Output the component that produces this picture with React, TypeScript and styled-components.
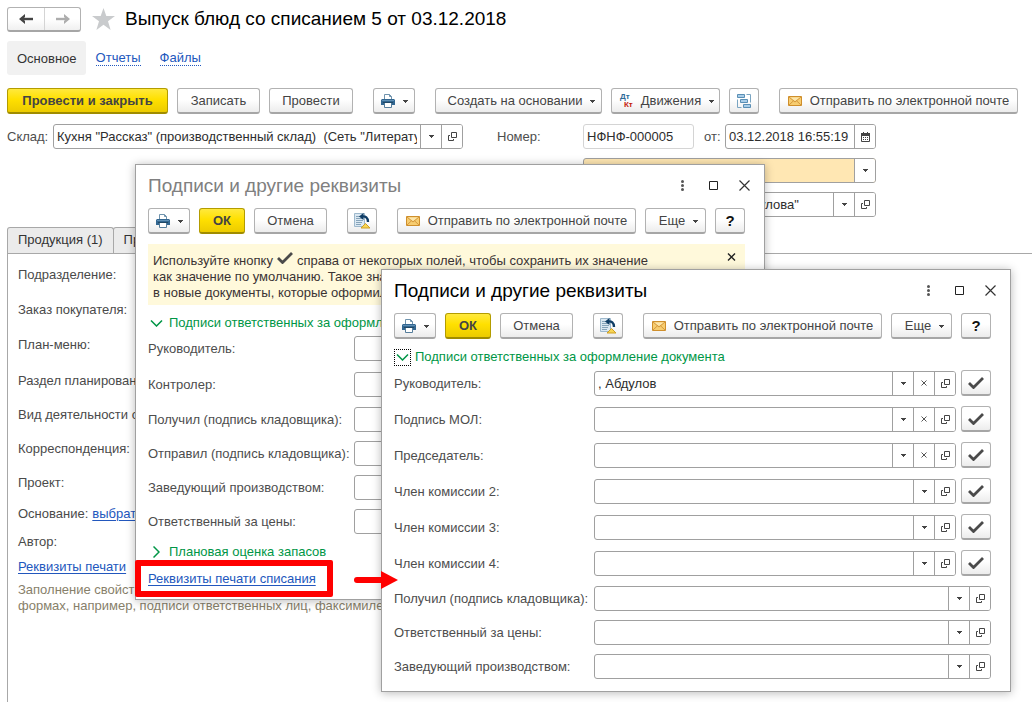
import React, { useId } from "react";
import styled, { createGlobalStyle, css } from "styled-components";

const GlobalStyle = createGlobalStyle`
  *, *::before, *::after { box-sizing: border-box; }
  body {
    margin: 0;
    background: #fff;
    color: #4a4a4a;
    font: 13px/16px "Liberation Sans", Arial, sans-serif;
  }
  button, input { font: inherit; color: inherit; margin: 0; }
  svg { display: block; flex: none; }
`;

/* ---------- page frame ---------- */

const Page = styled.div`
  position: relative;
  display: flex;
  flex-direction: column;
  min-height: 100vh;
  overflow: hidden;
  padding: 6px 0 0 7px;
`;

const Header = styled.header`
  display: flex;
  align-items: center;
  height: 26px;
`;

const History = styled.div`
  display: flex;
  margin-right: 11px;
  border: 1px solid #b2b2b2;
  border-bottom: 2px solid #a6a6a6;
  border-radius: 3px;
  background: linear-gradient(#fff 50%, #f0f0f0);
`;

const HistoryButton = styled.button`
  display: grid;
  place-items: center;
  width: 36px;
  height: 22px;
  padding: 0;
  border: 0;
  background: none;

  & + & { border-left: 1px solid #d4d4d4; }
`;

const StarButton = styled.button`
  padding: 0;
  border: 0;
  background: none;
`;

const PageTitle = styled.h1`
  margin: 0 0 0 10px;
  font-size: 19px;
  line-height: 24px;
  font-weight: 400;
  color: #000;
  white-space: nowrap;
`;

const Sections = styled.nav`
  display: flex;
  align-items: center;
  gap: 19px;
  margin-top: 9px;
`;

const CurrentSection = styled.span`
  margin-right: -9px;
  padding: 10px 9px 8px 10px;
  border-radius: 3px;
  background: #f1f1f1;
  color: #333;
`;

const SectionLink = styled.a`
  padding-top: 1px;
  border-bottom: 1px dotted #2257bd;
  color: #2257bd;
  line-height: 14px;
  text-decoration: none;
`;

/* ---------- buttons ---------- */

const Toolbar = styled.div`
  display: flex;
  gap: 9px;
`;

const MainToolbar = styled(Toolbar)`
  margin-top: 13px;
`;

const Button = styled.button<{ $w: number; $primary?: boolean; $apart?: boolean; $menu?: boolean }>`
  display: flex;
  align-items: center;
  justify-content: center;
  gap: 8px;
  flex: none;
  width: ${(p) => p.$w}px;
  height: 26px;
  margin-left: ${(p) => (p.$apart ? 11 : 0)}px;
  padding: 1px 0 0 ${(p) => (p.$menu ? 6 : 0)}px;
  border: 1px solid #b2b2b2;
  border-bottom: 2px solid #a6a6a6;
  border-radius: 3px;
  background: linear-gradient(#fff 45%, #ececec);
  color: #444;
  white-space: nowrap;

  ${(p) =>
    p.$primary &&
    css`
      border-color: #b39c00;
      border-bottom-color: #a08c00;
      background: linear-gradient(#ffe93d, #ffe000 45%, #eccb00);
      font-weight: 700;
    `}
`;

const HelpButton = styled(Button)`
  color: #111;
  font-size: 15px;
  font-weight: 700;
`;

const LedgerIcon = styled.span`
  display: flex;
  flex-direction: column;
  width: 16px;
  font-size: 8px;
  line-height: 8px;
  font-weight: 700;
`;

const Debit = styled.span`
  color: #2d6a98;
`;

const Credit = styled.span`
  align-self: flex-end;
  color: #c41a0e;
`;

/* ---------- fields ---------- */

const FieldFrame = styled.span<{ $muted?: boolean; $required?: boolean }>`
  display: flex;
  flex: 1;
  min-width: 0;
  height: 25px;
  overflow: hidden;
  border: 1px solid ${(p) => (p.$muted ? "#d4d4d4" : "#a0a0a0")};
  border-radius: 3px;
  background: ${(p) => (p.$required ? "#ffe7b3" : "#fff")};
`;

const FieldInput = styled.input`
  flex: 1;
  min-width: 0;
  width: 0;
  padding: 1px 3px 0;
  border: 0;
  outline: 0;
  background: none;
  color: #2d2d2d;
`;

const FieldButton = styled.button`
  display: grid;
  place-items: center;
  flex: none;
  width: 21px;
  padding: 0;
  border: 0;
  border-left: 1px solid #a0a0a0;
  background: #fff;
`;

const Label = styled.label`
  padding-top: 1px;
  color: #4d4d4d;
  white-space: nowrap;
`;

const HeadFields = styled.div`
  display: grid;
  grid-template-columns: 46px minmax(0, 410px) 34px 86px 293px;
  row-gap: 9px;
  align-items: center;
  margin-top: 10px;
`;

const HeadField = styled.div<{ $col: number }>`
  display: flex;
  align-items: center;
  grid-column: ${(p) => p.$col};
`;

const HeadLabel = styled(Label)<{ $col: number }>`
  grid-column: ${(p) => p.$col};
`;

const NumberBox = styled.div`
  display: flex;
  width: 111px;
`;

const DateLabel = styled(Label)`
  width: 31px;
  padding-left: 10px;
`;

/* ---------- tab panel ---------- */

const Tabs = styled.div`
  display: flex;
  margin-top: 10px;
`;

const Tab = styled.button`
  height: 26px;
  padding: 0 10px 2px;
  border: 1px solid #a8a8a8;
  border-bottom: 0;
  border-radius: 3px 3px 0 0;
  background: #ebebeb;
  color: #333;

  & + & { margin-left: -1px; }
`;

const Panel = styled.section`
  flex: 1;
  padding: 3px 0 0 10px;
  border: solid #a8a8a8;
  border-width: 1px 0 0 1px;
`;

const PanelRow = styled.div<{ $h: number }>`
  display: flex;
  align-items: center;
  gap: 4px;
  height: ${(p) => p.$h}px;
  white-space: nowrap;
`;

const Link = styled.a`
  color: #2257bd;
  text-decoration: underline;
  text-underline-offset: 2px;
  white-space: nowrap;
`;

const Hint = styled.p`
  margin: 3px 0 0;
  color: #87806a;
  white-space: pre-line;
`;

/* ---------- dialogs ---------- */

const Window = styled.section<{ $x: number; $y: number }>`
  position: absolute;
  left: ${(p) => p.$x}px;
  top: ${(p) => p.$y}px;
  width: 630px;
  padding: 7px 19px 8px 12px;
  border: 1px solid #a0a0a0;
  background: #fff;
  box-shadow: 0 1px 9px rgba(0, 0, 0, 0.28);
`;

const WindowHead = styled.div`
  display: flex;
  align-items: center;
  height: 26px;
  margin-bottom: 10px;
`;

const WindowTitle = styled.h2<{ $active?: boolean }>`
  flex: 1;
  margin: 0;
  padding-top: 1px;
  font-size: 19px;
  line-height: 24px;
  font-weight: 400;
  color: ${(p) => (p.$active ? "#000" : "#808080")};
`;

const WindowControl = styled.button`
  display: grid;
  place-items: center;
  width: 31px;
  height: 24px;
  padding: 0;
  border: 0;
  background: none;

  &:last-child { margin-right: -15px; }
`;

const Notice = styled.div`
  display: flex;
  justify-content: space-between;
  align-items: flex-start;
  margin-top: 10px;
  padding: 9px 8px 4px 5px;
  background: #fff9db;
  color: #3a3333;
`;

const NoticeText = styled.p`
  margin: 0;
`;

const NoticeLine = styled.span`
  display: flex;
  align-items: center;
  gap: 4px;
  height: 16px;
  white-space: nowrap;

  svg { margin-bottom: 6px; }
`;

const NoticeClose = styled.button`
  padding: 0 1px;
  border: 0;
  background: none;
`;

const Group = styled.button<{ $h: number }>`
  display: flex;
  align-items: center;
  gap: 4px;
  height: ${(p) => p.$h}px;
  padding: 0;
  border: 0;
  background: none;
  color: #009646;
  white-space: nowrap;
`;

const GroupMark = styled.span<{ $focused?: boolean }>`
  display: grid;
  place-items: center;
  width: 17px;
  height: 17px;
  border: 1px dotted ${(p) => (p.$focused ? "#000" : "transparent")};
`;

const Rows = styled.div`
  display: flex;
  flex-direction: column;
`;

const Row = styled.div<{ $check?: boolean; $labelWidth: number }>`
  display: grid;
  grid-template-columns: ${(p) => p.$labelWidth}px minmax(0, 1fr) ${(p) => (p.$check ? "30px" : "")};
  align-items: center;
  height: ${(p) => (p.$check ? 36 : 34)}px;
`;

const RowField = styled.div<{ $check?: boolean }>`
  display: flex;
  margin-right: ${(p) => (p.$check ? 5 : 0)}px;
`;

const FootLink = styled.div`
  display: flex;
  align-items: center;
  height: 25px;
`;

/* ---------- callout marks ---------- */

const Frame = styled.div`
  position: absolute;
  left: 135px;
  top: 560px;
  width: 198px;
  height: 37px;
  border: 6px solid #f00;
  border-radius: 2px;
  pointer-events: none;
`;

const Arrow = styled.svg`
  position: absolute;
  left: 354px;
  top: 571px;
`;

/* ---------- icons ---------- */

const Caret = () => (
  <svg width="5" height="3" viewBox="0 0 5 3"><path d="M0 0h5v1H4v1H3v1H2V2H1V1H0z" fill="#444" /></svg>
);

const Printer = () => (
  <svg width="14" height="14" viewBox="0 0 14 14">
    <path d="M3.5 5.5v-5h5l2 2v3z" fill="#fff" stroke="#6f93ad" />
    <path d="M8.5.5v2h2" fill="none" stroke="#6f93ad" />
    <path d="M1 5h12l1 1v5h-3V9H3v2H0V6z" fill="#336791" />
    <path d="M1 6.5h12" stroke="#5f90b5" />
    <path d="M3.5 8.5h7v5h-7z" fill="#fff" stroke="#557d9b" />
    <path d="M2 8.5h10" stroke="#1f4866" />
  </svg>
);

const Envelope = () => (
  <svg width="14" height="10" viewBox="0 0 14 10">
    <path d="M.5.5h13v9H.5z" fill="#f7cd70" stroke="#cf8f2c" />
    <path d="M2 1.500h10L7 5z" fill="#fce6ac" />
    <path d="M1 1l6 5 6-5M1 9l4.500-4.200M13 9L8.500 4.800" fill="none" stroke="#cc8a2e" strokeWidth=".8" />
  </svg>
);

const Structure = () => (
  <svg width="15" height="14" viewBox="0 0 15 14">
    <g fill="#a9cde8" stroke="#5a8fb5">
      <path d="M.5.5h7v3h-7zM3.500 5.500h7v3h-7zM6.500 10.500h7v3h-7z" />
    </g>
    <path d="M9.500.5h4v8M.5 5.500v8h4" fill="none" stroke="#7aa5c2" />
  </svg>
);

const Restore = () => (
  <svg width="17" height="16" viewBox="0 0 17 16">
    <path d="M.5.5h10v13H.5z" fill="#dbe8f2" stroke="#9db8cc" />
    <path d="M2 3.500h6M2 5.500h7M2 7.500h7M2 9.500h6M2 11.500h5" stroke="#86a4ba" />
    <path d="M8 3.500c3.500-.5 6 1 6 5.500" fill="none" stroke="#0f3d66" strokeWidth="2.400" />
    <path d="M5 3.500L9.500 0v7z" fill="#0f3d66" />
    <path d="M11.500 10.500l4.500 4.500H7z" fill="#f7d555" stroke="#cf9f22" />
  </svg>
);

const OpenIcon = () => (
  <svg width="9" height="9" viewBox="0 0 9 9" fill="none" stroke="#444">
    <path d="M3.500.5h5v5h-5zM2 3.500H.5v5h5V7" />
  </svg>
);

const ClearIcon = () => (
  <svg width="6" height="6" viewBox="0 0 6 6"><path d="M.5.5l5 5M5.500.5l-5 5" stroke="#555" /></svg>
);

const Calendar = () => (
  <svg width="9" height="10" viewBox="0 0 9 10">
    <path d="M.5 1.500h8v8h-8z" fill="#fff" stroke="#444" />
    <path d="M0 1h9v3H0zM2 0h1v1H2zM6 0h1v1H6z" fill="#444" />
    <path d="M2 5.500h5M2 7.500h5" stroke="#444" strokeDasharray="1 1" />
  </svg>
);

const Check = () => (
  <svg width="16" height="12" viewBox="0 0 16 12">
    <path d="M1 6l4.500 4.500L15 1" fill="none" stroke="#4a4a4a" strokeWidth="2.800" />
  </svg>
);

const Back = ({ color }: { color: string }) => (
  <svg width="14" height="10" viewBox="0 0 14 10">
    <path d="M2 5h12" stroke={color} strokeWidth="2.400" />
    <path d="M0 5l6-5v3L4 5l2 2v3z" fill={color} />
  </svg>
);

const Forward = ({ color }: { color: string }) => (
  <svg width="14" height="10" viewBox="0 0 14 10">
    <path d="M0 5h12" stroke={color} strokeWidth="2.400" />
    <path d="M14 5L8 0v3l2 2-2 2v3z" fill={color} />
  </svg>
);

const Star = () => (
  <svg width="23" height="22" viewBox="0 0 23 22">
    <path d="M11.500 0l2.800 8H23l-7 5.200L18.600 22l-7.100-5.300L4.400 22 7 13.200 0 8h8.700z" fill="#c9cbcd" />
  </svg>
);

const ChevronDown = () => (
  <svg width="13" height="7" viewBox="0 0 13 7"><path d="M1 .5l5.500 5.500L12 .5" fill="none" stroke="#009646" strokeWidth="1.500" /></svg>
);

const ChevronRight = () => (
  <svg width="7" height="12" viewBox="0 0 7 12"><path d="M.5.5L6 6 .5 11.500" fill="none" stroke="#009646" strokeWidth="1.500" /></svg>
);

/* ---------- shared parts ---------- */

type FieldProps = {
  id: string;
  value?: string;
  buttons?: string;
  muted?: boolean;
  required?: boolean;
};

const fieldIcons: Record<string, [string, React.ReactElement]> = {
  d: ["Выбрать", <Caret />],
  x: ["Очистить", <ClearIcon />],
  o: ["Открыть", <OpenIcon />],
  c: ["Календарь", <Calendar />],
};

const Field = ({ id, value = "", buttons = "", muted, required }: FieldProps) => (
  <FieldFrame $muted={muted} $required={required}>
    <FieldInput id={id} defaultValue={value} />
    {[...buttons].map((key) => (
      <FieldButton key={key} type="button" aria-label={fieldIcons[key][0]}>{fieldIcons[key][1]}</FieldButton>
    ))}
  </FieldFrame>
);

type RowData = { label: string; value?: string; buttons: string; check?: boolean };

const FormRow = ({ row, labelWidth }: { row: RowData; labelWidth: number }) => {
  const id = useId();
  return (
    <Row $check={row.check} $labelWidth={labelWidth}>
      <Label htmlFor={id}>{row.label}</Label>
      <RowField $check={row.check}><Field id={id} value={row.value} buttons={row.buttons} /></RowField>
      {row.check && <Button $w={30} type="button" aria-label="Сохранить по умолчанию"><Check /></Button>}
    </Row>
  );
};

const DialogHead = ({ active }: { active?: boolean }) => (
  <>
    <WindowHead>
      <WindowTitle $active={active}>Подписи и другие реквизиты</WindowTitle>
      <WindowControl aria-label="Меню">
        <svg width="3" height="11" viewBox="0 0 3 11" fill="#555"><circle cx="1.500" cy="1.500" r="1.500" /><circle cx="1.500" cy="5.500" r="1.500" /><circle cx="1.500" cy="9.500" r="1.500" /></svg>
      </WindowControl>
      <WindowControl aria-label="Развернуть">
        <svg width="9" height="9" viewBox="0 0 9 9"><path d="M.5.5h8v8h-8z" fill="none" stroke="#222" /></svg>
      </WindowControl>
      <WindowControl aria-label="Закрыть">
        <svg width="11" height="11" viewBox="0 0 11 11"><path d="M.5.5l10 10M10.500.5l-10 10" stroke="#333" strokeWidth="1.200" /></svg>
      </WindowControl>
    </WindowHead>
    <Toolbar>
      <Button $w={42} aria-label="Печать"><Printer /><Caret /></Button>
      <Button $w={46} $primary>ОК</Button>
      <Button $w={73}>Отмена</Button>
      <Button $w={30} $apart aria-label="Восстановить"><Restore /></Button>
      <Button $w={239} $apart><Envelope />Отправить по электронной почте</Button>
      <Button $w={61} $menu>Еще<Caret /></Button>
      <HelpButton $w={30}>?</HelpButton>
    </Toolbar>
  </>
);

const NoticeGroup = styled(Group)`
  margin-top: 4px;
`;

const BackRows = styled(Rows)`
  margin-top: -7px;
`;

const FrontRows = styled(Rows)`
  margin-top: -10px;
`;

const backRows: RowData[] = [
  { label: "Руководитель:", buttons: "dxo", check: true },
  { label: "Контролер:", buttons: "dxo", check: true },
  { label: "Получил (подпись кладовщика):", buttons: "do" },
  { label: "Отправил (подпись кладовщика):", buttons: "do" },
  { label: "Заведующий производством:", buttons: "do" },
  { label: "Ответственный за цены:", buttons: "do" },
];

const frontRows: RowData[] = [
  { label: "Руководитель:", value: ", Абдулов", buttons: "dxo", check: true },
  { label: "Подпись МОЛ:", buttons: "dxo", check: true },
  { label: "Председатель:", buttons: "dxo", check: true },
  { label: "Член комиссии 2:", buttons: "do", check: true },
  { label: "Член комиссии 3:", buttons: "do", check: true },
  { label: "Член комиссии 4:", buttons: "do", check: true },
  { label: "Получил (подпись кладовщика):", buttons: "do" },
  { label: "Ответственный за цены:", buttons: "do" },
  { label: "Заведующий производством:", buttons: "do" },
];

const panelRows: [string, number][] = [
  ["Подразделение:", 35],
  ["Заказ покупателя:", 35],
  ["План-меню:", 36],
  ["Раздел планирования:", 35],
  ["Вид деятельности списания:", 34],
  ["Корреспонденция:", 34],
  ["Проект:", 34],
];

export default function App() {
  return (
    <Page>
      <GlobalStyle />
      <Header>
        <History>
          <HistoryButton aria-label="Назад"><Back color="#444" /></HistoryButton>
          <HistoryButton aria-label="Вперед"><Forward color="#adadad" /></HistoryButton>
        </History>
        <StarButton aria-label="В избранное"><Star /></StarButton>
        <PageTitle>Выпуск блюд со списанием 5 от 03.12.2018</PageTitle>
      </Header>

      <Sections>
        <CurrentSection>Основное</CurrentSection>
        <SectionLink href="#reports">Отчеты</SectionLink>
        <SectionLink href="#files">Файлы</SectionLink>
      </Sections>

      <MainToolbar>
        <Button $w={161} $primary>Провести и закрыть</Button>
        <Button $w={83}>Записать</Button>
        <Button $w={84}>Провести</Button>
        <Button $w={42} $apart aria-label="Печать"><Printer /><Caret /></Button>
        <Button $w={167} $apart $menu>Создать на основании<Caret /></Button>
        <Button $w={109}>
          <LedgerIcon><Debit>Дт</Debit><Credit>Кт</Credit></LedgerIcon>Движения<Caret />
        </Button>
        <Button $w={30} aria-label="Структура"><Structure /></Button>
        <Button $w={239} $apart><Envelope />Отправить по электронной почте</Button>
      </MainToolbar>

      <HeadFields>
        <HeadLabel $col={1} htmlFor="store">Склад:</HeadLabel>
        <HeadField $col={2}>
          <Field id="store" value={'Кухня "Рассказ" (производственный склад)  (Сеть "Литература")'} buttons="do" />
        </HeadField>
        <HeadLabel $col={4} htmlFor="number">Номер:</HeadLabel>
        <HeadField $col={5}>
          <NumberBox><Field id="number" value="НФНФ-000005" muted /></NumberBox>
          <DateLabel htmlFor="date">от:</DateLabel>
          <Field id="date" value="03.12.2018 16:55:19" buttons="c" />
        </HeadField>
        <HeadLabel $col={4} htmlFor="operation">Операция:</HeadLabel>
        <HeadField $col={5}><Field id="operation" buttons="d" required /></HeadField>
        <HeadLabel $col={4} htmlFor="company">Компания:</HeadLabel>
        <HeadField $col={5}>
          <Field id="company" value={'Сеть "Литературн. кафе Абдулова"'} buttons="do" />
        </HeadField>
      </HeadFields>

      <Tabs>
        <Tab>Продукция (1)</Tab>
        <Tab>Прочее</Tab>
      </Tabs>
      <Panel>
        {panelRows.map(([text, h]) => (
          <PanelRow key={text} $h={h}>{text}</PanelRow>
        ))}
        <PanelRow $h={28}>Основание: <Link href="#basis">выбрать</Link></PanelRow>
        <PanelRow $h={27}>Автор:</PanelRow>
        <PanelRow $h={24}><Link href="#print">Реквизиты печати</Link></PanelRow>
        <Hint>{"Заполнение свойств, которые используются в печатных\nформах, например, подписи ответственных лиц, факсимиле"}</Hint>
      </Panel>

      <Window $x={135} $y={164}>
        <DialogHead />
        <Notice>
          <NoticeText>
            <NoticeLine>Используйте кнопку <Check /> справа от некоторых полей, чтобы сохранить их значение</NoticeLine>
            <NoticeLine>как значение по умолчанию. Такое значение будет подставляться</NoticeLine>
            <NoticeLine>в новые документы, которые оформил пользователь</NoticeLine>
          </NoticeText>
          <NoticeClose aria-label="Скрыть">
            <svg width="9" height="8" viewBox="0 0 9 8"><path d="M1 .5l7 7M8 .5l-7 7" stroke="#222" strokeWidth="1.400" /></svg>
          </NoticeClose>
        </Notice>
        <NoticeGroup $h={28}><GroupMark><ChevronDown /></GroupMark>Подписи ответственных за оформление документа</NoticeGroup>
        <BackRows>
          {backRows.map((row) => <FormRow key={row.label} row={row} labelWidth={206} />)}
        </BackRows>
        <Group $h={28}><GroupMark><ChevronRight /></GroupMark>Плановая оценка запасов</Group>
        <FootLink><Link href="#writeoff">Реквизиты печати списания</Link></FootLink>
      </Window>

      <Window $x={381} $y={269}>
        <DialogHead active />
        <Group $h={36}><GroupMark $focused><ChevronDown /></GroupMark>Подписи ответственных за оформление документа</Group>
        <FrontRows>
          {frontRows.map((row) => <FormRow key={row.label} row={row} labelWidth={200} />)}
        </FrontRows>
      </Window>

      <Frame />
      <Arrow width="44" height="18" viewBox="0 0 44 18">
        <path d="M3 9h26" stroke="#f00" strokeWidth="6" strokeLinecap="round" />
        <path d="M27 0l17 9-17 9z" fill="#f00" />
      </Arrow>
    </Page>
  );
}
